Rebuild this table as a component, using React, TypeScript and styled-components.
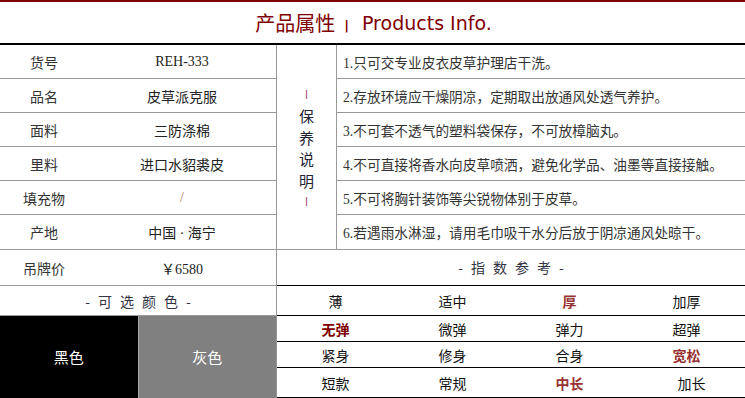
import React from 'react';
import styled, { createGlobalStyle } from 'styled-components';

const GlobalStyle = createGlobalStyle`
  * { box-sizing: border-box; }
  html, body { margin: 0; padding: 0; background: #fff; }
  body {
    font-family: "Liberation Serif", "Noto Sans CJK SC", serif;
    font-size: 14px;
    color: #333;
  }
`;

const CJK = `"Noto Sans CJK SC", "Liberation Sans", sans-serif`;
const LINE = '#999';

const Page = styled.div`
  width: 745px;
  height: 398px;
  overflow: hidden;
  background: #fff;
`;

const TopBar = styled.div`
  height: 2px;
  background: #7f0000;
`;

const Heading = styled.h1`
  margin: 0;
  height: 43px;
  border-bottom: 2px solid #000;
  display: flex;
  align-items: center;
  justify-content: center;
  font-family: "DejaVu Sans", "Noto Sans CJK SC", sans-serif;
  font-size: 19px;
  font-weight: normal;
  color: #7f0000;
  padding-left: 2px;
`;

const HeadingCn = styled.span`
  font-family: ${CJK};
  font-size: 20px;
`;

const HeadingBar = styled.span`
  font-size: 13px;
  font-weight: bold;
  margin: 5px 13px 0 9px;
`;

const Upper = styled.div`
  display: flex;
  border-bottom: 1px solid ${LINE};
`;

const AttrList = styled.div`
  width: 277px;
  border-right: 1px solid ${LINE};
`;

const Row = styled.div<{ $last?: boolean }>`
  height: 34px;
  display: flex;
  align-items: center;
  border-bottom: ${p => (p.$last ? 'none' : `1px solid ${LINE}`)};
`;

const Label = styled.div`
  width: 88px;
  text-align: center;
  font-family: ${CJK};
  color: #333;
`;

const Value = styled.div<{ $muted?: boolean }>`
  flex: 1;
  text-align: center;
  color: ${p => (p.$muted ? '#b08060' : '#222')};
`;

const CareTitle = styled.div`
  width: 60px;
  border-right: 1px solid ${LINE};
  display: flex;
  flex-direction: column;
  align-items: center;
  justify-content: center;
  font-family: ${CJK};
  font-size: 15px;
  line-height: 21.5px;
  color: #223;
  padding-top: 2px;
`;

const CareMark = styled.span`
  color: #7f1040;
  font-family: "DejaVu Sans", sans-serif;
  font-size: 9px;
`;

const CareList = styled.div`
  flex: 1;
`;

const CareItem = styled(Row)`
  padding-left: 6px;
  color: #333;
  font-size: 13.7px;
`;

const Middle = styled.div`
  display: flex;
  height: 36px;
`;

const PriceRow = styled.div`
  width: 277px;
  display: flex;
  align-items: center;
  border-right: 1px solid ${LINE};
  border-bottom: 1px solid ${LINE};
`;

const SectionTitle = styled.div`
  flex: 1;
  display: flex;
  align-items: center;
  justify-content: center;
  font-family: ${CJK};
  color: #334;
  letter-spacing: 8px;
  padding-left: 8px;
`;

const IndexTitle = styled(SectionTitle)`
  border-bottom: 1px solid #000;
  padding-bottom: 1px;
`;

const Lower = styled.div`
  display: flex;
  height: 112px;
`;

const ColorPanel = styled.div`
  width: 277px;
  border-right: 1px solid ${LINE};
  display: flex;
  flex-direction: column;
`;

const PanelTitle = styled(SectionTitle)`
  flex: none;
  height: 30px;
  border-bottom: 1px solid ${LINE};
`;

const Swatches = styled.div`
  flex: 1;
  display: flex;
`;

const Swatch = styled.div<{ $color: string; $first?: boolean }>`
  flex: 1;
  display: flex;
  align-items: center;
  justify-content: center;
  background: ${p => p.$color};
  border-left: ${p => (p.$first ? 'none' : '1px solid #aaa')};
  color: #fff;
  font-family: ${CJK};
  font-size: 15px;
  padding-bottom: 2px;
`;

const IndexTable = styled.div`
  flex: 1;
  display: grid;
  grid-template-columns: repeat(4, 1fr);
  grid-template-rows: 30px 26px 26px 30px;
`;

type Tone = 'plain' | 'deep' | 'warm';

const IndexCell = styled.div<{ $tone: Tone; $indent?: boolean }>`
  display: flex;
  align-items: center;
  justify-content: center;
  border-bottom: 1px solid #000;
  font-family: ${CJK};
  font-weight: ${p => (p.$tone === 'plain' ? 'normal' : 'bold')};
  color: ${p => (p.$tone === 'deep' ? '#800000' : p.$tone === 'warm' ? '#993333' : '#111')};
  padding-left: ${p => (p.$indent ? '10px' : '0')};
`;

const attrs: [string, string][] = [
  ['货号', 'REH-333'],
  ['品名', '皮草派克服'],
  ['面料', '三防涤棉'],
  ['里料', '进口水貂裘皮'],
  ['填充物', '/'],
  ['产地', '中国 · 海宁'],
];

const care = [
  '1.只可交专业皮衣皮草护理店干洗。',
  '2.存放环境应干燥阴凉，定期取出放通风处透气养护。',
  '3.不可套不透气的塑料袋保存，不可放樟脑丸。',
  '4.不可直接将香水向皮草喷洒，避免化学品、油墨等直接接触。',
  '5.不可将胸针装饰等尖锐物体别于皮草。',
  '6.若遇雨水淋湿，请用毛巾吸干水分后放于阴凉通风处晾干。',
];

const index: { text: string; tone: Tone; indent?: boolean }[][] = [
  [
    { text: '薄', tone: 'plain' },
    { text: '适中', tone: 'plain' },
    { text: '厚', tone: 'warm' },
    { text: '加厚', tone: 'plain' },
  ],
  [
    { text: '无弹', tone: 'deep' },
    { text: '微弹', tone: 'plain' },
    { text: '弹力', tone: 'plain' },
    { text: '超弹', tone: 'plain' },
  ],
  [
    { text: '紧身', tone: 'plain' },
    { text: '修身', tone: 'plain' },
    { text: '合身', tone: 'plain' },
    { text: '宽松', tone: 'warm' },
  ],
  [
    { text: '短款', tone: 'plain' },
    { text: '常规', tone: 'plain' },
    { text: '中长', tone: 'warm' },
    { text: '加长', tone: 'plain', indent: true },
  ],
];

export default function App() {
  return (
    <Page>
      <GlobalStyle />
      <TopBar />
      <Heading>
        <HeadingCn>产品属性</HeadingCn>
        <HeadingBar>|</HeadingBar>
        Products Info.
      </Heading>

      <Upper>
        <AttrList>
          {attrs.map(([k, v], i) => (
            <Row key={k} $last={i === attrs.length - 1}>
              <Label>{k}</Label>
              <Value $muted={v === '/'}>{v}</Value>
            </Row>
          ))}
        </AttrList>
        <CareTitle>
          <CareMark>|</CareMark>
          <span>保</span>
          <span>养</span>
          <span>说</span>
          <span>明</span>
          <CareMark>|</CareMark>
        </CareTitle>
        <CareList>
          {care.map((c, i) => (
            <CareItem key={c} $last={i === care.length - 1}>
              {c}
            </CareItem>
          ))}
        </CareList>
      </Upper>

      <Middle>
        <PriceRow>
          <Label>吊牌价</Label>
          <Value>￥6580</Value>
        </PriceRow>
        <IndexTitle>-指数参考-</IndexTitle>
      </Middle>

      <Lower>
        <ColorPanel>
          <PanelTitle>-可选颜色-</PanelTitle>
          <Swatches>
            <Swatch $color="#000" $first>黑色</Swatch>
            <Swatch $color="#808080">灰色</Swatch>
          </Swatches>
        </ColorPanel>
        <IndexTable>
          {index.flat().map((cell, i) => (
            <IndexCell key={i} $tone={cell.tone} $indent={cell.indent}>
              {cell.text}
            </IndexCell>
          ))}
        </IndexTable>
      </Lower>
    </Page>
  );
}
